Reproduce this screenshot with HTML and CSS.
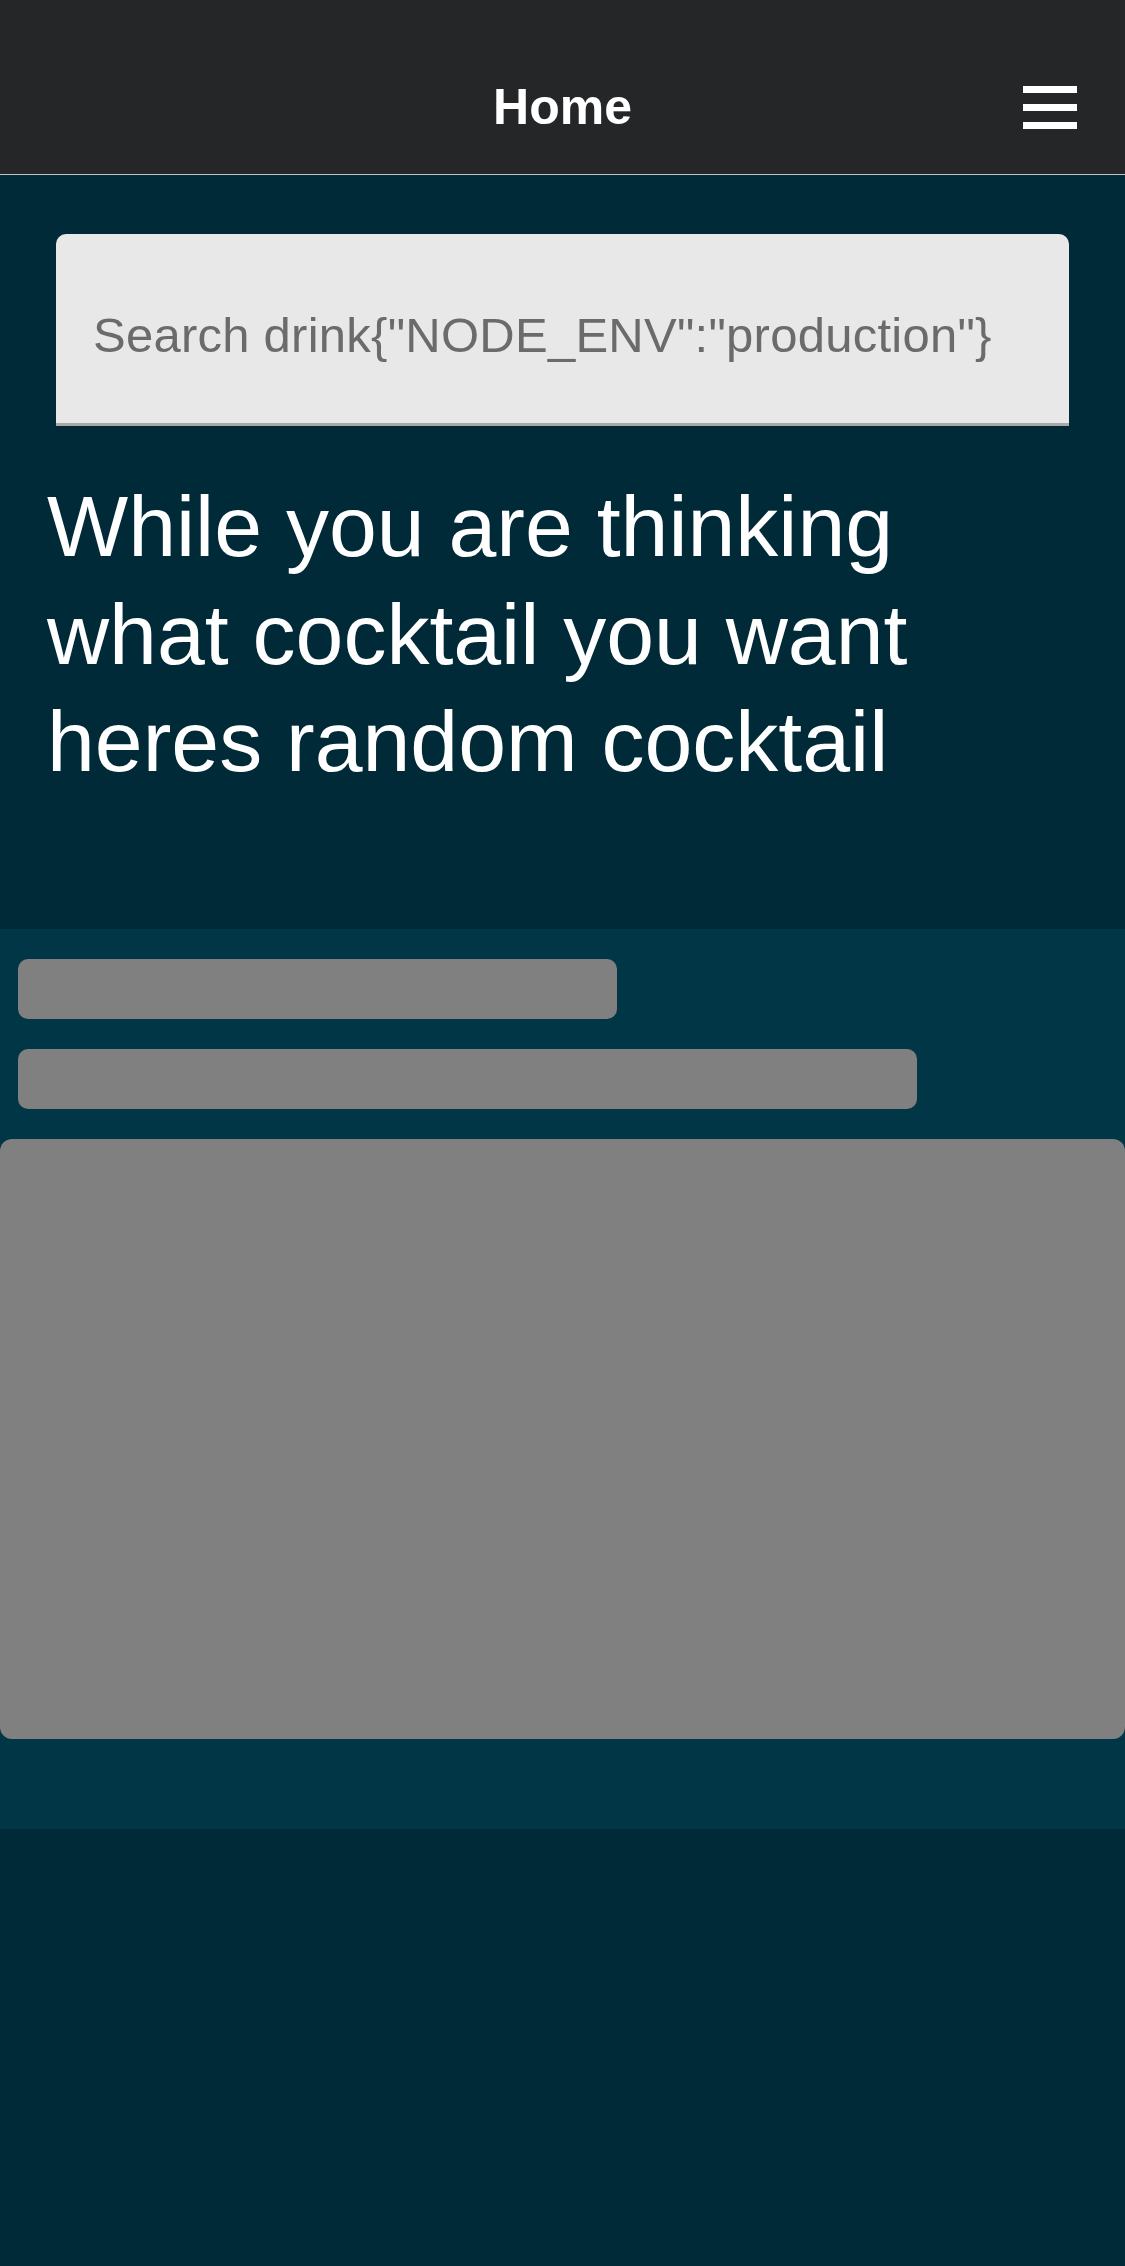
FILE: index.html
```html
<!DOCTYPE html>
<html lang="en">
<head>
<meta charset="utf-8">
<title>Home</title>
<link rel="stylesheet" href="styles.css">
</head>
<body>
<header class="topbar">
  <div class="topbar-side"></div>
  <h1 class="topbar-title">Home</h1>
  <div class="topbar-side topbar-right">
    <button class="menu-btn" aria-label="Menu">
      <span class="bar"></span><span class="bar"></span><span class="bar"></span>
    </button>
  </div>
</header>
<main>
  <section class="intro">
    <div class="search">
      <input class="search-input" type="text" placeholder="Search drink{&quot;NODE_ENV&quot;:&quot;production&quot;}">
    </div>
    <h2 class="intro-title">While you are thinking what cocktail you want heres random cocktail</h2>
  </section>
  <section class="random">
    <div class="skel skel-title"></div>
    <div class="skel skel-sub"></div>
    <div class="skel skel-image"></div>
  </section>
</main>
</body>
</html>
```

FILE: styles.css
```css
* { box-sizing: border-box; }
html, body {
  margin: 0;
  padding: 0;
  background: #002a38;
  font-family: "Liberation Sans", Arial, sans-serif;
  min-height: 2266px;
}
.topbar {
  display: grid;
  grid-template-columns: 1fr auto 1fr;
  align-items: center;
  height: 175px;
  padding-top: 40px;
  background: #252628;
  border-bottom: 1px solid #bfc3c6;
}
.topbar-title {
  margin: 0;
  color: #ffffff;
  font-size: 50px;
  font-weight: 700;
  line-height: 58px;
}
.topbar-right {
  display: flex;
  justify-content: flex-end;
  padding-right: 48px;
}
.menu-btn {
  display: flex;
  flex-direction: column;
  gap: 11px;
  width: 54px;
  padding: 0;
  border: 0;
  background: transparent;
}
.bar {
  display: block;
  width: 54px;
  height: 7px;
  background: #ffffff;
}
.intro {
  padding: 59px 47px 133px 47px;
}
.search {
  margin: 0 9px;
}
.search-input {
  display: block;
  width: 100%;
  height: 192px;
  padding: 73px 20px 60px 37px;
  border: 0;
  border-bottom: 3px solid #a8a8a8;
  border-radius: 10px 10px 0 0;
  background: #e8e8e8;
  font-family: "Liberation Sans", Arial, sans-serif;
  font-size: 49px;
  line-height: 56px;
  letter-spacing: 0.25px;
  color: #333;
  outline: none;
}
.search-input::placeholder {
  color: #6b6b6b;
  opacity: 1;
}
.intro-title {
  margin: 47px 0 0 0;
  color: #ffffff;
  font-size: 86px;
  font-weight: 400;
  line-height: 107.5px;
}
.random {
  display: flex;
  flex-direction: column;
  align-items: flex-start;
  gap: 30px;
  padding: 30px 0 90px 0;
  background: #003646;
}
.skel {
  background: #808080;
  border-radius: 10px;
}
.skel-title {
  width: 599px;
  height: 60px;
  margin-left: 18px;
}
.skel-sub {
  width: 899px;
  height: 60px;
  margin-left: 18px;
}
.skel-image {
  width: 100%;
  height: 600px;
  border-radius: 12px;
}
```
